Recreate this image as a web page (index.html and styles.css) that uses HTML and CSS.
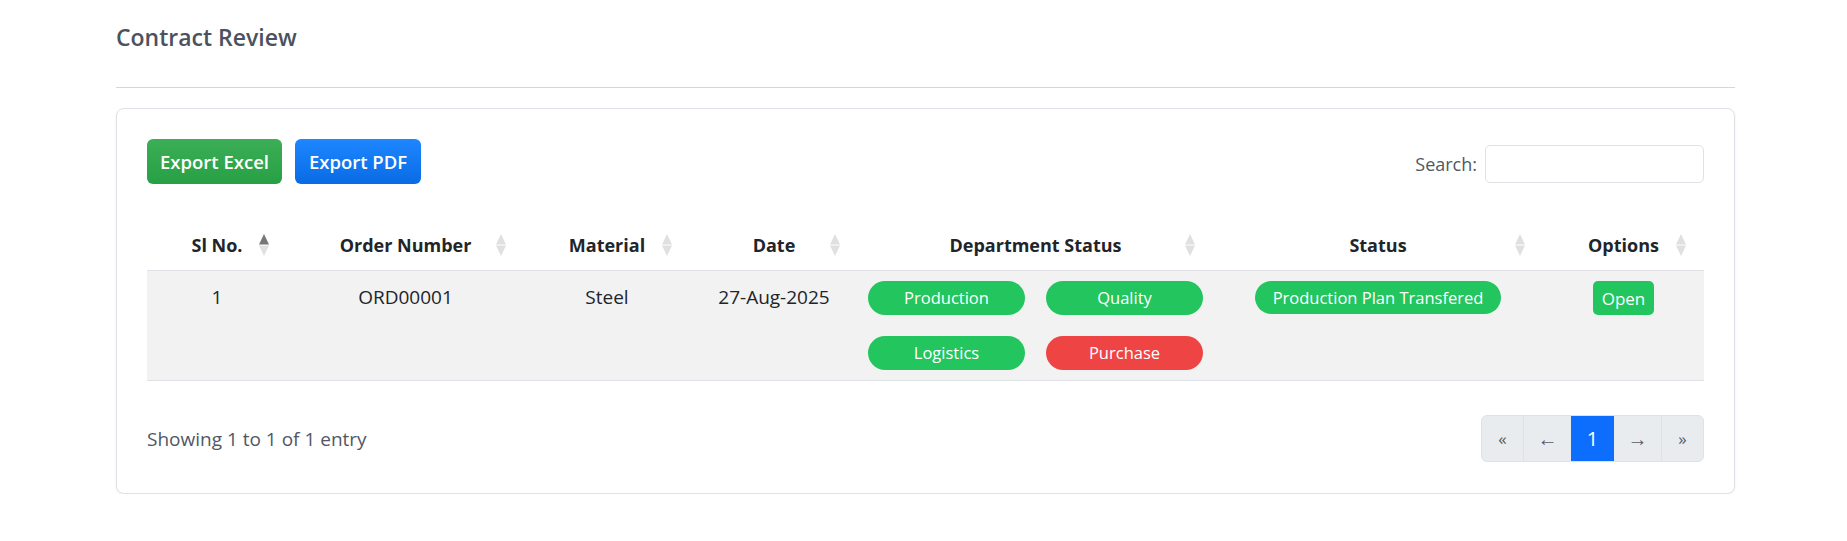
FILE: index.html
```html
<!DOCTYPE html>
<html lang="en">
<head>
<meta charset="utf-8">
<title>Contract Review</title>
<link rel="stylesheet" href="styles.css">
</head>
<body>
<div class="page">
  <h1 class="page-title">Contract Review</h1>
  <hr class="divider">
  <div class="card">
    <div class="toolbar">
      <div class="actions">
        <button class="btn btn-excel">Export Excel</button>
        <button class="btn btn-pdf">Export PDF</button>
      </div>
      <label class="search">Search: <input type="text" class="search-input"></label>
    </div>
    <table class="grid">
      <colgroup>
        <col style="width:140px">
        <col style="width:237px">
        <col style="width:166px">
        <col style="width:168px">
        <col style="width:355px">
        <col style="width:330px">
        <col style="width:161px">
      </colgroup>
      <thead>
        <tr>
          <th>Sl No.<span class="sort asc"><svg viewBox="0 0 10 22" width="10" height="22"><path class="up" d="M5 0 L10 10.5 L0 10.5 Z"/><path class="down" d="M0 11.5 L10 11.5 L5 22 Z"/></svg></span></th>
          <th>Order Number<span class="sort"><svg viewBox="0 0 10 22" width="10" height="22"><path class="up" d="M5 0 L10 10.5 L0 10.5 Z"/><path class="down" d="M0 11.5 L10 11.5 L5 22 Z"/></svg></span></th>
          <th>Material<span class="sort"><svg viewBox="0 0 10 22" width="10" height="22"><path class="up" d="M5 0 L10 10.5 L0 10.5 Z"/><path class="down" d="M0 11.5 L10 11.5 L5 22 Z"/></svg></span></th>
          <th>Date<span class="sort"><svg viewBox="0 0 10 22" width="10" height="22"><path class="up" d="M5 0 L10 10.5 L0 10.5 Z"/><path class="down" d="M0 11.5 L10 11.5 L5 22 Z"/></svg></span></th>
          <th>Department Status<span class="sort"><svg viewBox="0 0 10 22" width="10" height="22"><path class="up" d="M5 0 L10 10.5 L0 10.5 Z"/><path class="down" d="M0 11.5 L10 11.5 L5 22 Z"/></svg></span></th>
          <th>Status<span class="sort"><svg viewBox="0 0 10 22" width="10" height="22"><path class="up" d="M5 0 L10 10.5 L0 10.5 Z"/><path class="down" d="M0 11.5 L10 11.5 L5 22 Z"/></svg></span></th>
          <th>Options<span class="sort"><svg viewBox="0 0 10 22" width="10" height="22"><path class="up" d="M5 0 L10 10.5 L0 10.5 Z"/><path class="down" d="M0 11.5 L10 11.5 L5 22 Z"/></svg></span></th>
        </tr>
      </thead>
      <tbody>
        <tr>
          <td>1</td>
          <td>ORD00001</td>
          <td>Steel</td>
          <td>27-Aug-2025</td>
          <td>
            <div class="dept">
              <span class="pill ok">Production</span>
              <span class="pill ok">Quality</span>
              <span class="pill ok">Logistics</span>
              <span class="pill bad">Purchase</span>
            </div>
          </td>
          <td><span class="pill ok status-pill">Production Plan Transfered</span></td>
          <td><button class="open-btn">Open</button></td>
        </tr>
      </tbody>
    </table>
    <div class="footer">
      <div class="info">Showing 1 to 1 of 1 entry</div>
      <div class="pager">
        <span class="pg first">«</span>
        <span class="pg prev">←</span>
        <span class="pg active">1</span>
        <span class="pg next">→</span>
        <span class="pg last">»</span>
      </div>
    </div>
  </div>
</div>
</body>
</html>
```

FILE: styles.css
```css
* { box-sizing: border-box; }
body {
  margin: 0;
  font-family: "Open Sans", "Noto Sans", sans-serif;
  color: #212529;
  background: #fff;
}
.page {
  width: 1619px;
  margin-left: 116px;
}
.page-title {
  margin: 0;
  padding-top: 22px;
  font-size: 23px;
  line-height: 30px;
  font-weight: 600;
  color: #4a5260;
}
.divider {
  margin: 35px 0 20px;
  border: 0;
  border-top: 1px solid #d6d6d6;
  height: 0;
}
.card {
  border: 1px solid #dee2e6;
  border-radius: 8px;
  padding: 30px 30px 31px;
  box-shadow: 0 1px 3px rgba(0,0,0,0.06);
  background: #fff;
}
.toolbar {
  display: flex;
  justify-content: space-between;
  align-items: flex-start;
}
.actions {
  display: flex;
  gap: 13px;
}
.btn {
  height: 45px;
  border: 0;
  border-radius: 6px;
  padding: 0;
  font-family: inherit;
  font-size: 18.5px;
  font-weight: 600;
  color: #fff;
  cursor: pointer;
}
.btn-excel {
  width: 135px;
  background: linear-gradient(#3cae57, #27a044);
}
.btn-pdf {
  width: 126px;
  background: linear-gradient(#1d87ff, #0a6be4);
}
.search {
  display: flex;
  align-items: center;
  gap: 8px;
  margin-top: 6px;
  font-size: 18px;
  color: #4f5864;
}
.search-input {
  width: 219px;
  height: 38px;
  border: 1px solid #dee2e6;
  border-radius: 5px;
  outline: none;
}
.grid {
  width: 100%;
  margin-top: 36px;
  border-collapse: collapse;
  table-layout: fixed;
}
.grid th {
  position: relative;
  padding: 11px 10px;
  line-height: 28px;
  font-size: 18px;
  font-weight: 700;
  text-align: center;
  color: #212529;
  border-bottom: 1px solid #dee2e6;
}
.sort {
  position: absolute;
  right: 18px;
  top: 14px;
  width: 10px;
  height: 22px;
  display: flex;
}
.sort .up, .sort .down { fill: #e0e0e0; }
.sort.asc .up { fill: #777; }
.grid td {
  padding: 10px 10px;
  line-height: 32px;
  font-size: 19px;
  text-align: center;
  vertical-align: top;
  background: #f2f2f2;
  border-bottom: 1px solid #dee2e6;
  color: #212529;
}
.dept {
  display: grid;
  grid-template-columns: 1fr 1fr;
  gap: 21px 21px;
}
.pill {
  display: block;
  height: 34px;
  line-height: 34px;
  border-radius: 17px;
  font-size: 16.5px;
  color: #fff;
  white-space: nowrap;
}
.pill.ok { background: #22c55e; }
.pill.bad { background: #ef4444; }
.status-pill {
  display: inline-block;
  margin-top: -1px;
  height: 33px;
  line-height: 33px;
  padding: 0 12px;
  width: 246px;
}
.open-btn {
  height: 34px;
  width: 61px;
  border: 0;
  border-radius: 5px;
  background: #22c55e;
  color: #fff;
  font-family: inherit;
  font-size: 17px;
  padding: 0;
}
.footer {
  margin-top: 34px;
  display: flex;
  justify-content: space-between;
  align-items: center;
}
.info {
  font-size: 19px;
  color: #4f5864;
}
.pager {
  display: flex;
  height: 47px;
  border: 1px solid #dee2e6;
  border-radius: 6px;
  overflow: hidden;
  background: #e9ecef;
}
.pg {
  display: flex;
  align-items: center;
  justify-content: center;
  color: #555c66;
  font-size: 19px;
  border-left: 1px solid #dee2e6;
}
.pg:first-child { border-left: 0; }
.pg.first { width: 41px; font-size: 17px; }
.pg.prev { width: 48px; font-size: 20px; }
.pg.active { width: 43px; background: #0d6efd; color: #fff; border-left: 0; font-size: 20px; }
.pg.next { width: 47px; border-left: 0; font-size: 20px; }
.pg.last { width: 42px; font-size: 17px; }
```
